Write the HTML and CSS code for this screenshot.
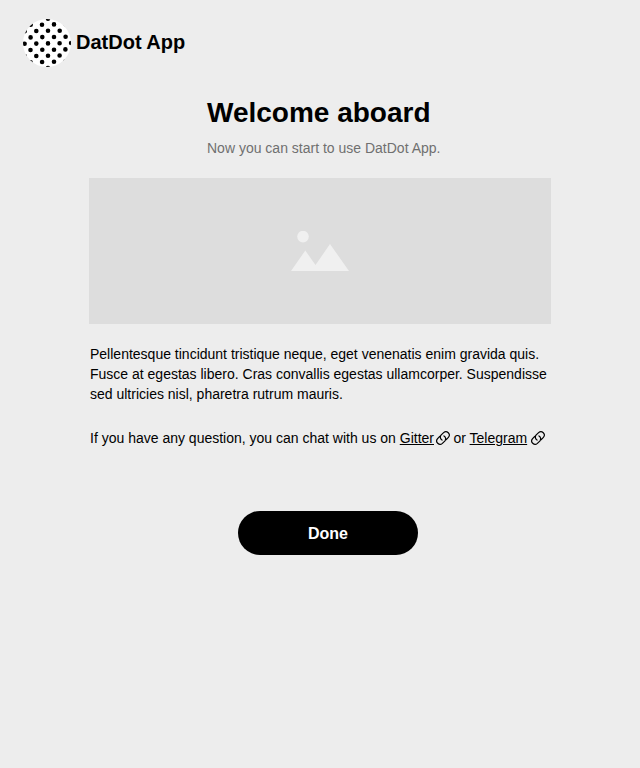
FILE: index.html
```html
<!DOCTYPE html>
<html lang="en">
<head>
<meta charset="utf-8">
<title>DatDot App</title>
<link rel="stylesheet" href="styles.css">
</head>
<body>
<svg class="defs" aria-hidden="true">
  <symbol id="link" viewBox="0 0 16 16">
    <path d="M7 10.1A3.4 3.4 0 0 1 6 5.2L8.6 2.6A3.4 3.4 0 0 1 13.4 7.4L11.3 9.5"/>
    <path d="M9 5.9A3.4 3.4 0 0 1 10 10.8L7.4 13.4A3.4 3.4 0 0 1 2.6 8.6L4.7 6.5"/>
  </symbol>
</svg>
<header class="brand">
  <svg class="logo" viewBox="0 0 48 48" aria-hidden="true">
    <clipPath id="disc"><circle cx="24" cy="24" r="24"/></clipPath>
    <circle cx="24" cy="24" r="24" fill="#fff"/>
    <g clip-path="url(#disc)">
      <path class="dots" d="M25-.3h0M7.7 5.8h0M19 5.7h0M31 5.4h0M42.7 5.3h0M1.7 12.2h0M13.3 12h0M25 11.8h0M36.7 11.7h0M7.6 18.4h0M19.3 18.1h0M31 18h0M42.6 17.8h0M1.6 24.7h0M13.3 24.6h0M25 24.4h0M36.6 24.2h0M48.1 24h0M7.5 31h0M19.3 30.8h0M31 30.7h0M42.4 30.4h0M1.6 37h0M13.3 37h0M25 36.7h0M36.6 36.5h0M7.6 43.2h0M19.1 43h0M31 42.8h0M42.5 42.6h0M25 49h0"/>
    </g>
  </svg>
  <span class="brand-name">DatDot App</span>
</header>
<main class="content">
  <div class="intro">
    <h1>Welcome aboard</h1>
    <p class="subtitle">Now you can start to use DatDot App.</p>
  </div>
  <div class="placeholder">
    <svg class="picture" viewBox="0 0 58 40" aria-hidden="true">
      <circle cx="12" cy="5.6" r="5.8"/>
      <path d="M0 40 14.3 19.5 24.5 34 39 13 58 40z"/>
    </svg>
  </div>
  <div class="copy">
    <p>Pellentesque tincidunt tristique neque, eget venenatis enim gravida quis.<br>Fusce at egestas libero. Cras convallis egestas ullamcorper. Suspendisse<br>sed ultricies nisl, pharetra rutrum mauris.</p>
    <p class="contact"><span>If you have any question, you can chat with us on <a href="#">Gitter</a></span><svg class="link first"><use href="#link"/></svg><span>or <a href="#">Telegram</a></span><svg class="link second"><use href="#link"/></svg></p>
  </div>
  <button class="done">Done</button>
</main>
</body>
</html>
```
FILE: styles.css
```css
* { box-sizing: border-box; }
body {
  margin: 0;
  min-height: 768px;
  background: #ededed;
  color: #000;
  font-family: "Liberation Sans", Arial, sans-serif;
}
h1, p { margin: 0; }
.defs { display: none; }
.brand {
  display: flex;
  align-items: center;
  gap: 5px;
  height: 67px;
  padding: 19px 0 0 23px;
}
.logo { width: 48px; height: 48px; }
.dots { fill: none; stroke: #000; stroke-width: 4.6; stroke-linecap: round; }
.brand-name { font-size: 20px; font-weight: 700; line-height: 24px; margin-top: -2px; }
.content { width: 462px; margin-left: 89px; padding-top: 29px; }
.intro { padding-left: 118px; white-space: nowrap; }
h1 { font-size: 28px; line-height: 34px; }
.subtitle { margin-top: 8px; font-size: 14px; line-height: 20px; color: #707070; }
.placeholder {
  display: flex;
  justify-content: center;
  align-items: center;
  height: 146px;
  margin-top: 20px;
  background: #ddd;
}
.picture { width: 58px; height: 40px; fill: #f0f0f0; }
.copy { padding: 20px 0 0 1px; font-size: 14px; line-height: 20px; white-space: nowrap; }
.contact { display: flex; align-items: center; margin-top: 24px; }
.contact a { color: #000; text-decoration: underline; }
.link {
  width: 16px;
  height: 16px;
  flex: none;
  fill: none;
  stroke: #000;
  stroke-width: 1.2;
  stroke-linecap: round;
  stroke-linejoin: round;
}
.first { margin: 0 2.5px 0 1px; }
.second { margin-left: 2.5px; }
.done {
  display: block;
  width: 180px;
  height: 44px;
  margin: 63px 0 0 149px;
  padding: 2px 0 0;
  border: 0;
  border-radius: 22px;
  background: #000;
  color: #fff;
  font: 700 16px/42px "Liberation Sans", Arial, sans-serif;
}
```
